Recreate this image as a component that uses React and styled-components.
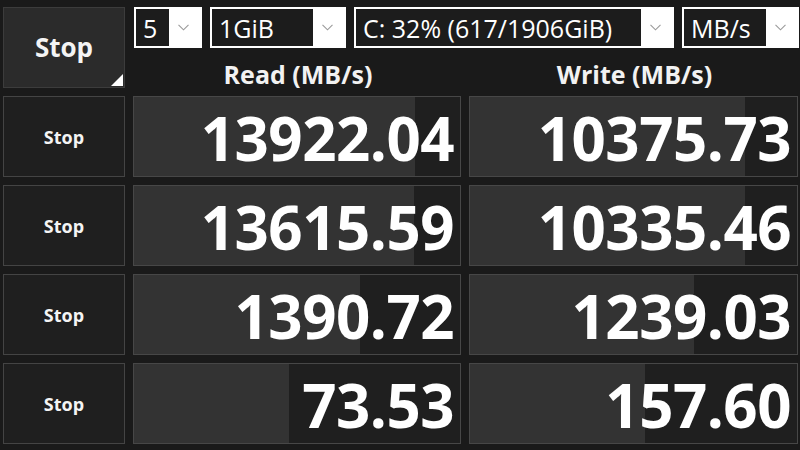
import styled, { createGlobalStyle } from "styled-components";

const GlobalStyle = createGlobalStyle`
  html, body {
    margin: 0;
    padding: 0;
    background: #1a1a1a;
  }
  body {
    width: 800px;
    height: 450px;
    overflow: hidden;
    font-family: "Open Sans", "Noto Sans", sans-serif;
    color: #ffffff;
  }
`;

const rows = [
  { read: "13922.04", readFill: 281, write: "10375.73", writeFill: 275 },
  { read: "13615.59", readFill: 280, write: "10335.46", writeFill: 275 },
  { read: "1390.72", readFill: 226, write: "1239.03", writeFill: 224 },
  { read: "73.53", readFill: 155, write: "157.60", writeFill: 175 },
];

function App() {
  return (
    <>
      <GlobalStyle />
      <Window>
        <BigStop>Stop</BigStop>
        <TopArea>
          <Toolbar>
            <Select width={68} value="5" />
            <Select width={136} value="1GiB" />
            <Select width={320} value="C: 32% (617/1906GiB)" />
            <Select width={117} value="MB/s" />
          </Toolbar>
          <Headers>
            <Header>Read (MB/s)</Header>
            <Header>Write (MB/s)</Header>
          </Headers>
        </TopArea>
        {rows.map((r, i) => (
          <Row key={i}>
            <StopButton>Stop</StopButton>
            <Meter fill={r.readFill}>
              <Value>{r.read}</Value>
            </Meter>
            <Meter fill={r.writeFill}>
              <Value>{r.write}</Value>
            </Meter>
          </Row>
        ))}
      </Window>
    </>
  );
}

function Select({ width, value }) {
  return (
    <SelectBox width={width}>
      <SelectText>{value}</SelectText>
      <Chevron>
        <svg width="11" height="7" viewBox="0 0 11 7">
          <path d="M0.5 0.8 L5.5 5.8 L10.5 0.8" fill="none" stroke="#9a9a9a" strokeWidth="1.1" />
        </svg>
      </Chevron>
    </SelectBox>
  );
}

const Window = styled.div`
  display: grid;
  grid-template-columns: 122px 665px;
  grid-auto-rows: 81px;
  column-gap: 9px;
  row-gap: 8px;
  padding: 7px 0 0 3px;
`;

const BigStop = styled.div`
  position: relative;
  box-sizing: border-box;
  display: flex;
  align-items: center;
  justify-content: center;
  background: #2b2b2b;
  border: 1px solid #3c3c3c;
  font-size: 26px;
  font-weight: 700;
  color: #f4f4f4;
  padding-bottom: 2px;

  &::after {
    content: "";
    position: absolute;
    right: 1px;
    bottom: 1px;
    width: 0;
    height: 0;
    border-style: solid;
    border-width: 0 0 12px 12px;
    border-color: transparent transparent #ffffff transparent;
  }
`;

const TopArea = styled.div`
  display: flex;
  flex-direction: column;
`;

const Toolbar = styled.div`
  display: flex;
  gap: 8px;
  height: 41px;
`;

const SelectBox = styled.div`
  box-sizing: border-box;
  width: ${(p) => p.width}px;
  height: 41px;
  display: flex;
  background: #ffffff;
  padding: 2px;
`;

const SelectText = styled.div`
  flex: 1;
  background: #1c1c1c;
  color: #ffffff;
  font-size: 25px;
  line-height: 37px;
  padding: 1px 0 0 7px;
  white-space: nowrap;
  overflow: hidden;
`;

const Chevron = styled.div`
  width: 29px;
  display: flex;
  align-items: center;
  justify-content: center;
  padding-right: 2px;
`;

const Headers = styled.div`
  display: grid;
  grid-template-columns: 328px 329px;
  column-gap: 8px;
  margin-top: 11px;
`;

const Header = styled.div`
  text-align: center;
  font-size: 25px;
  font-weight: 700;
  line-height: 30px;
  color: #f2f2f2;
`;

const Row = styled.div`
  grid-column: 1 / -1;
  display: grid;
  grid-template-columns: 122px 328px 329px;
  column-gap: 8px;
`;

const StopButton = styled.div`
  box-sizing: border-box;
  display: flex;
  align-items: center;
  justify-content: center;
  background: #1f1f1f;
  border: 1px solid #444444;
  font-size: 18px;
  font-weight: 700;
  color: #f4f4f4;
`;

const Meter = styled.div`
  box-sizing: border-box;
  display: flex;
  align-items: center;
  justify-content: flex-end;
  border: 1px solid #474747;
  background: linear-gradient(
    to right,
    #333333 0,
    #333333 ${(p) => p.fill}px,
    #1f1f1f ${(p) => p.fill}px
  );
  padding-right: 6px;
`;

const Value = styled.div`
  font-size: 60px;
  font-weight: 700;
  letter-spacing: -0.5px;
  line-height: 1;
  color: #ffffff;
  padding-top: 2px;
`;

export default App;
